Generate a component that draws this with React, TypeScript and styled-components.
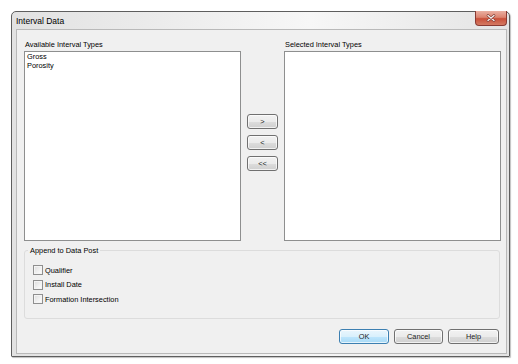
import styled, { createGlobalStyle } from 'styled-components';

const GlobalStyle = createGlobalStyle`
  html, body {
    margin: 0;
    padding: 0;
    background: #ffffff;
  }
  body {
    font-family: "Liberation Sans", Arial, sans-serif;
    font-size: 7.4px;
    color: #000;
  }
`;

const Desktop = styled.div`
  width: 518px;
  height: 364px;
  padding: 11px 0 0 11px;
  box-sizing: border-box;
  background: #ffffff;
`;

const Window = styled.div`
  position: relative;
  width: 499px;
  height: 346px;
  box-sizing: border-box;
  border: 1px solid #5e5e5e;
  border-radius: 5px 5px 1px 1px;
  background: linear-gradient(90deg, #e2e2e2 0%, #ececec 30%, #f7f7f7 60%, #e4e4e4 100%);
  display: flex;
  flex-direction: column;
  box-shadow: 1px 1px 1px rgba(0, 0, 0, 0.25);
`;

const TitleBar = styled.div`
  height: 17px;
  display: flex;
  align-items: center;
  padding-left: 4px;
  font-size: 8.5px;
  color: #000;
`;

const CloseButton = styled.div`
  position: absolute;
  top: -1px;
  right: 2px;
  width: 32px;
  height: 15px;
  box-sizing: border-box;
  border: 1px solid #8a3a32;
  border-top: none;
  border-radius: 0 0 4px 4px;
  background: linear-gradient(180deg, #eab0a2 0%, #dc8470 45%, #c9503a 55%, #d47a62 100%);
  display: flex;
  align-items: center;
  justify-content: center;
`;

const Client = styled.div`
  flex: 1;
  margin: 0 2px 2px 4px;
  border: 1px solid #b9b9b9;
  background: #f0f0f0;
  display: flex;
  flex-direction: column;
  padding: 10px 5px 0 7px;
`;

const Panes = styled.div`
  display: grid;
  grid-template-columns: 217px 43px 217px;
  grid-template-rows: 11px 190px;
`;

const PaneLabel = styled.div<{ $col: number }>`
  grid-column: ${(p) => p.$col};
  grid-row: 1;
  line-height: 9px;
  padding-left: 1px;
`;

const ListBox = styled.div<{ $col: number }>`
  grid-column: ${(p) => p.$col};
  grid-row: 2;
  background: #fff;
  border: 1px solid #8e8f8f;
  box-sizing: border-box;
  padding: 1px 2px;
`;

const ListItem = styled.div`
  line-height: 8.5px;
`;

const Movers = styled.div`
  grid-column: 2;
  grid-row: 2;
  display: flex;
  flex-direction: column;
  align-items: center;
  gap: 6px;
  padding-top: 63px;
`;

const PushButton = styled.button<{ $width: number; $default?: boolean }>`
  width: ${(p) => p.$width}px;
  height: 15px;
  padding: 0;
  box-sizing: border-box;
  font-family: "Liberation Sans", Arial, sans-serif;
  font-size: 7.4px;
  color: #222;
  border-radius: 3px;
  border: 1px solid ${(p) => (p.$default ? '#3c7fb1' : '#707070')};
  background: ${(p) =>
    p.$default
      ? 'linear-gradient(180deg, #eaf6fd 0%, #d9f0fc 50%, #bee6fd 51%, #a7d9f5 100%)'
      : 'linear-gradient(180deg, #f2f2f2 0%, #ebebeb 50%, #dddddd 51%, #cfcfcf 100%)'};
  box-shadow: inset 0 0 0 1px rgba(255, 255, 255, 0.7);
  cursor: default;
`;

const Group = styled.fieldset`
  margin: 5px 1px 0 0;
  padding: 8px 0 11px 8px;
  border: 1px solid #dcdcdc;
  border-radius: 3px;
  display: flex;
  flex-direction: column;
  min-width: 0;
`;

const Legend = styled.legend`
  padding: 0 2px;
  margin-left: -5px;
  line-height: 9px;
`;

const CheckRow = styled.label`
  display: flex;
  align-items: center;
  gap: 2px;
  height: 14.5px;
`;

const CheckBox = styled.span`
  width: 10px;
  height: 10px;
  box-sizing: border-box;
  border: 1px solid #8f8f8f;
  background: linear-gradient(135deg, #dcdcdc 0%, #f2f2f2 60%, #ffffff 100%);
  box-shadow: inset 0 0 0 1px #f4f4f4;
`;

const Footer = styled.div`
  display: flex;
  justify-content: flex-end;
  gap: 5px;
  padding: 10px 2px 0 0;
`;

const pairs = ['Qualifier', 'Install Date', 'Formation Intersection'];

export default function App() {
  return (
    <Desktop>
      <GlobalStyle />
      <Window>
        <TitleBar>Interval Data</TitleBar>
        <CloseButton>
          <svg width="10" height="8" viewBox="0 0 10 8">
            <path d="M2 1.5 L8 6.5 M8 1.5 L2 6.5" stroke="#7a3a30" strokeWidth="2.6" strokeLinecap="round" />
            <path d="M2 1.5 L8 6.5 M8 1.5 L2 6.5" stroke="#f4eeee" strokeWidth="1.4" strokeLinecap="round" />
          </svg>
        </CloseButton>
        <Client>
          <Panes>
            <PaneLabel $col={1}>Available Interval Types</PaneLabel>
            <PaneLabel $col={3}>Selected Interval Types</PaneLabel>
            <ListBox $col={1}>
              <ListItem>Gross</ListItem>
              <ListItem>Porosity</ListItem>
            </ListBox>
            <Movers>
              <PushButton $width={31}>&gt;</PushButton>
              <PushButton $width={31}>&lt;</PushButton>
              <PushButton $width={31}>&lt;&lt;</PushButton>
            </Movers>
            <ListBox $col={3} />
          </Panes>
          <Group>
            <Legend>Append to Data Post</Legend>
            {pairs.map((label) => (
              <CheckRow key={label}>
                <CheckBox />
                {label}
              </CheckRow>
            ))}
          </Group>
          <Footer>
            <PushButton $width={50} $default>
              OK
            </PushButton>
            <PushButton $width={49}>Cancel</PushButton>
            <PushButton $width={51}>Help</PushButton>
          </Footer>
        </Client>
      </Window>
    </Desktop>
  );
}
